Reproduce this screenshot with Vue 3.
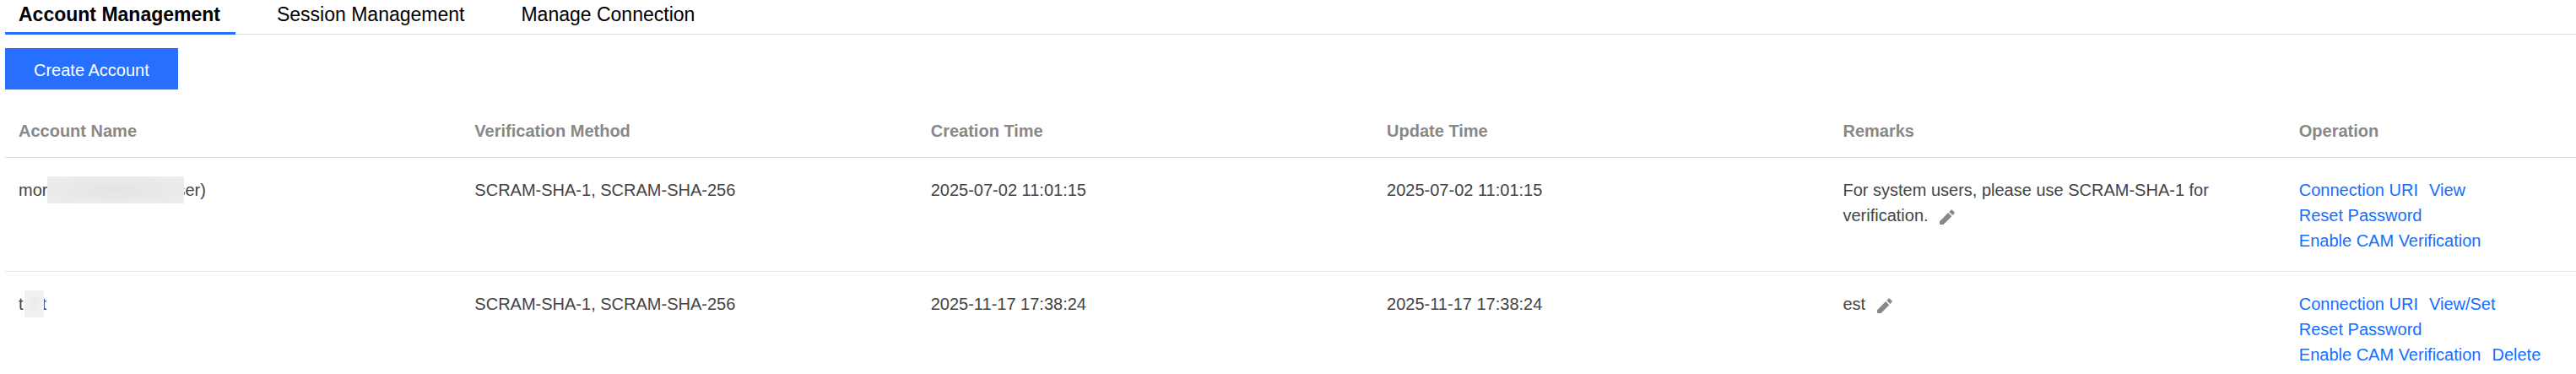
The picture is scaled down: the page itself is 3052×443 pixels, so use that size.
<script setup>
import { ref } from 'vue'

const tabs = ['Account Management', 'Session Management', 'Manage Connection']
const activeTab = ref(tabs[0])

const columns = ['Account Name', 'Verification Method', 'Creation Time', 'Update Time', 'Remarks', 'Operation']

const accounts = [
  {
    id: 1,
    nameStart: 'mor',
    nameEnd: 'ser)',
    mask: 'mask-wide',
    method: 'SCRAM-SHA-1, SCRAM-SHA-256',
    created: '2025-07-02 11:01:15',
    updated: '2025-07-02 11:01:15',
    remarks: 'For system users, please use SCRAM-SHA-1 for verification.',
    operations: [['Connection URI', 'View'], ['Reset Password'], ['Enable CAM Verification']],
  },
  {
    id: 2,
    nameStart: 't',
    nameEnd: 't',
    mask: 'mask-narrow',
    method: 'SCRAM-SHA-1, SCRAM-SHA-256',
    created: '2025-11-17 17:38:24',
    updated: '2025-11-17 17:38:24',
    remarks: 'est',
    operations: [['Connection URI', 'View/Set'], ['Reset Password'], ['Enable CAM Verification', 'Delete']],
  },
]
</script>

<template>
  <main class="page">
    <div class="tabs" role="tablist">
      <button
        v-for="tab in tabs"
        :key="tab"
        type="button"
        role="tab"
        class="tab"
        :class="{ active: tab === activeTab }"
        :aria-selected="tab === activeTab"
        @click="activeTab = tab"
      >{{ tab }}</button>
    </div>

    <div class="toolbar">
      <button type="button" class="create">Create Account</button>
    </div>

    <table class="accounts">
      <thead>
        <tr>
          <th v-for="column in columns" :key="column" scope="col">{{ column }}</th>
        </tr>
      </thead>
      <tbody>
        <tr v-for="account in accounts" :key="account.id">
          <td>
            <span class="name">
              <span>{{ account.nameStart }}</span>
              <span class="mask" :class="account.mask"></span>
              <span>{{ account.nameEnd }}</span>
            </span>
          </td>
          <td>{{ account.method }}</td>
          <td>{{ account.created }}</td>
          <td>{{ account.updated }}</td>
          <td>
            {{ account.remarks }}
            <button type="button" class="edit" aria-label="Edit remarks">
              <svg width="18" height="18" viewBox="0 0 18 18" aria-hidden="true">
                <path d="M0 17V14.2L10.2 4L14.4 8.2L4.6 18H1Q0 18 0 17Z" />
                <path d="M11.3 2.9L13.5 0.7Q14.2 0 14.9 0.7L17.5 3.3Q18.2 4 17.5 4.7L15.4 6.9Z" />
              </svg>
            </button>
          </td>
          <td>
            <div v-for="(line, index) in account.operations" :key="index" class="operations">
              <a v-for="operation in line" :key="operation" href="#" @click.prevent>{{ operation }}</a>
            </div>
          </td>
        </tr>
      </tbody>
    </table>
  </main>
</template>

<style>
body {
  background: #fff;
}
</style>

<style scoped>
.page {
  padding-left: 6px;
  color: #444;
  font-family: "Liberation Sans", Arial, sans-serif;
  font-size: 20px;
  line-height: 30px;
}

button {
  border: 0;
  padding: 0;
  background: none;
  font: inherit;
  cursor: pointer;
}

.tabs {
  display: flex;
  gap: 33px;
  box-shadow: inset 0 -1px #ddd;
}

.tab {
  padding: 1px 18px 5px 16px;
  border-bottom: 3px solid transparent;
  color: #000;
  font-size: 23px;
  line-height: 32px;
}

.tab.active {
  border-color: #266fff;
  font-weight: 700;
}

.toolbar {
  padding: 16px 0;
  display: flex;
}

.create {
  padding: 12px 34px 8px;
  background: #266fff;
  color: #fff;
  line-height: 29px;
}

.accounts {
  width: 100%;
  table-layout: fixed;
  border-spacing: 0;
}

th,
td {
  padding: 23px 16px 21px;
  text-align: left;
  vertical-align: top;
  border-bottom: 1px solid #e8e8e8;
}

th {
  width: 17.74%;
  box-sizing: border-box;
  padding: 18px 16px 16px;
  border-color: #ddd;
  color: #888;
  font-weight: 700;
}

th:last-child {
  width: auto;
}

tbody tr:last-child td {
  border-bottom: 0;
}

.name {
  display: flex;
  align-items: center;
}

.mask {
  position: relative;
  height: 32px;
  margin: -1px 0;
  background: radial-gradient(#e4e4e4, #eee);
}

.mask-wide {
  width: 162px;
  margin-right: -9px;
}

.mask-narrow {
  width: 23px;
  margin-left: 1px;
  margin-right: -2px;
  background: radial-gradient(#ebebeb, #f3f3f3);
}

.edit {
  margin-left: 8px;
  line-height: 0;
  vertical-align: -4px;
}

.edit svg {
  display: block;
  fill: #888;
}

.operations {
  display: flex;
  gap: 13px;
}

.operations a {
  color: #146eff;
  text-decoration: none;
}
</style>
